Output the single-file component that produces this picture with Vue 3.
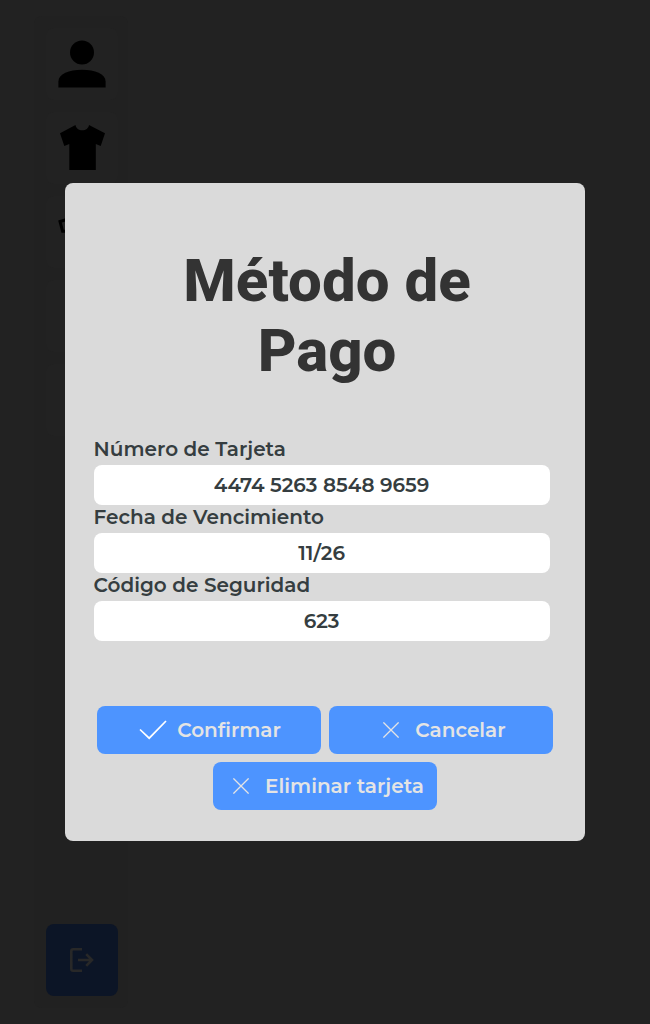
<script setup>
const fields = [
  { id: 'numero', label: 'Número de Tarjeta', value: '4474 5263 8548 9659' },
  { id: 'fecha', label: 'Fecha de Vencimiento', value: '11/26' },
  { id: 'codigo', label: 'Código de Seguridad', value: '623' },
]
const actions = [
  { id: 'confirmar', label: 'Confirmar', icon: 'check' },
  { id: 'cancelar', label: 'Cancelar', icon: 'cross' },
  { id: 'eliminar', label: 'Eliminar tarjeta', icon: 'cross' },
]
</script>

<template>
  <div class="page">
    <nav class="sidebar">
      <div class="tile">
        <svg width="72" height="72" viewBox="0 0 72 72">
          <circle cx="36" cy="24.4" r="12" />
          <path d="M12.4 59.4V53.5C12.4 46 23 41.8 36 41.8S59.6 46 59.6 53.5V59.4Z" />
        </svg>
      </div>
      <div class="tile">
        <svg width="72" height="72" viewBox="0 0 72 72">
          <path d="M29.5 13C30 16.3 32.8 18.3 36.3 18.3S42.5 16.3 43 13L59 21.3 54.7 34 49.8 32V58H23.3V32L18.3 34 14 21.3Z" />
        </svg>
      </div>
      <div class="tile">
        <svg width="72" height="72" viewBox="0 0 72 72" fill="none" stroke="#000" stroke-width="3">
          <path d="M24 22.5 14 25.6 16.6 35.2H24" />
        </svg>
      </div>
      <div class="tile"></div>
      <div class="tile"></div>
      <button class="logout" aria-label="Salir">
        <svg width="24" height="24" viewBox="0 0 24 24" fill="none" stroke="#282828" stroke-width="2.6">
          <path d="M12 1.3H3Q1.3 1.3 1.3 3V21Q1.3 22.7 3 22.7H12M8 12H22M16.2 6.2 22 12 16.2 17.8" />
        </svg>
      </button>
    </nav>

    <section class="modal">
      <h1>Método de Pago</h1>
      <form class="form" @submit.prevent>
        <div v-for="f in fields" :key="f.id" class="field">
          <label :for="f.id">{{ f.label }}</label>
          <div :id="f.id" class="value">{{ f.value }}</div>
        </div>
      </form>
      <div class="actions">
        <button v-for="a in actions" :key="a.id" class="action" :class="a.id">
          <svg v-if="a.icon === 'check'" width="28" height="20" viewBox="0 0 28 20" fill="none" stroke="#fff" stroke-width="1.7">
            <path d="M1 9.5 10.2 18.2 27 1" />
          </svg>
          <svg v-else width="16" height="16" viewBox="0 0 16 16" fill="none" stroke="#e4e4e4" stroke-width="1.3">
            <path d="M.4 .4 15.6 15.6M15.6 .4 .4 15.6" />
          </svg>
          <span>{{ a.label }}</span>
        </button>
      </div>
    </section>
  </div>
</template>

<style>
body {
  background: #222;
}
</style>

<style scoped>
.page {
  position: relative;
  box-sizing: border-box;
  height: 1024px;
  overflow: hidden;
  padding: 16px 34px;
  background: #222;
  font-family: Montserrat, Inter, "Open Sans", sans-serif;
}
.sidebar {
  box-sizing: border-box;
  display: flex;
  flex-direction: column;
  gap: 12px;
  width: 94px;
  height: 992px;
  padding: 12px 10px 12px 12px;
  border-radius: 8px;
  background: #212121;
}
.tile {
  width: 72px;
  height: 72px;
  border-radius: 8px;
  background: #222;
}
.tile svg {
  display: block;
}
.logout {
  display: grid;
  place-items: center;
  width: 72px;
  height: 72px;
  margin-top: auto;
  padding: 0;
  border: 0;
  border-radius: 8px;
  background: #0c1526;
}
.modal {
  position: absolute;
  top: 183px;
  left: 65px;
  box-sizing: border-box;
  width: 520px;
  height: 658px;
  padding: 63px 28px 31px;
  border-radius: 8px;
  background: #dadada;
}
h1 {
  width: 320px;
  margin: 0 auto;
  padding-left: 4px;
  color: #333;
  font: 800 60px/70px Roboto, sans-serif;
  text-align: center;
}
.form {
  width: 456px;
  margin: 51px 0 0 0.6px;
}
.field label {
  display: block;
  height: 28px;
  color: #353d40;
  font-size: 20px;
  font-weight: 600;
  line-height: 24px;
  white-space: nowrap;
}
.value {
  height: 40px;
  border-radius: 8px;
  background: #fff;
  color: #353d40;
  font-size: 20px;
  font-weight: 600;
  line-height: 40px;
  text-align: center;
}
.actions {
  display: flex;
  flex-wrap: wrap;
  justify-content: center;
  gap: 8px;
  margin-top: 65px;
}
.action {
  box-sizing: border-box;
  display: flex;
  align-items: center;
  justify-content: center;
  width: 224px;
  height: 48px;
  padding: 0 0 0 2px;
  border: 0;
  border-radius: 8px;
  background: #4d94ff;
  color: #e4e4e4;
  font: 600 20px/24px Montserrat, Inter, "Open Sans", sans-serif;
  white-space: nowrap;
}
.confirmar svg {
  margin-right: 10px;
}
.cancelar,
.eliminar {
  padding-left: 7px;
}
.cancelar svg,
.eliminar svg {
  margin-right: 16px;
}
</style>
